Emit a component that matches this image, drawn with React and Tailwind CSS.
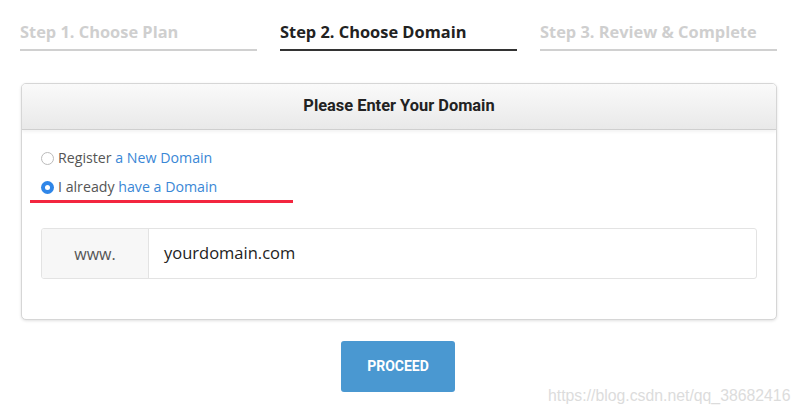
export default function App() {
  const steps = [
    { label: "Step 1. Choose Plan", active: false },
    { label: "Step 2. Choose Domain", active: true },
    { label: "Step 3. Review & Complete", active: false },
  ];
  return (
    <div className="relative w-[800px] h-[414px] bg-white overflow-hidden">
      <div className="flex gap-[23px] pl-[20px]">
        {steps.map((s) => (
          <div
            key={s.label}
            className={`w-[237px] pt-[20px] pb-[5px] border-b-2 ${s.active ? "border-[#333]" : "border-[#d0d0d0]"}`}
          >
            <div
              className={`text-[16.4px] leading-[24px] font-bold ${s.active ? "text-[#222]" : "text-[#cfcfcf]"}`}
              style={{ fontFamily: '"Open Sans", sans-serif' }}
            >
              {s.label}
            </div>
          </div>
        ))}
      </div>

      <div className="ml-[21px] mt-[32px] w-[756px] rounded-[5px] border border-[#d6d6d6] shadow-[0_1px_3px_rgba(0,0,0,0.12)] bg-white overflow-hidden">
        <div
          className="h-[46px] flex items-center justify-center border-b border-[#cfcfcf] bg-gradient-to-b from-[#fafafa] to-[#e9e9e9] shadow-[0_2px_3px_rgba(0,0,0,0.05)]"
        >
          <span
            className="text-[16.4px] font-bold text-[#222]"
            style={{ fontFamily: "Roboto, sans-serif" }}
          >
            Please Enter Your Domain
          </span>
        </div>
        <div className="pt-[16px] pb-[40px] px-[19px]" style={{ fontFamily: '"Open Sans", sans-serif' }}>
          <div className="flex items-center h-[24px] text-[14.2px] text-[#555]">
            <span className="w-[13px] h-[13px] rounded-full border border-[#bbb] bg-white mr-[4px]" />
            <span>Register&nbsp;</span>
            <span className="text-[#3a87d6]">a New Domain</span>
          </div>
          <div className="flex items-center h-[24px] mt-[5px] text-[14.2px] text-[#555]">
            <span className="w-[13px] h-[13px] rounded-full bg-[#2f86e8] mr-[4px] flex items-center justify-center">
              <span className="w-[5px] h-[5px] rounded-full bg-white" />
            </span>
            <span>I already&nbsp;</span>
            <span className="text-[#3a87d6]">have a Domain</span>
          </div>
          <div className="ml-[-11px] mt-[1px] w-[263px] h-[3px] bg-[#f3263f]" />
          <div className="mt-[25px] flex h-[51px] border border-[#e3e3e3] rounded-[3px] overflow-hidden">
            <div className="w-[107px] bg-[#f7f7f7] border-r border-[#e3e3e3] flex items-center justify-center text-[16px] text-[#555]">
              www.
            </div>
            <div className="flex-1 flex items-center pl-[15px] text-[16.5px] text-[#222]">
              yourdomain.com
            </div>
          </div>
        </div>
      </div>

      <div className="flex justify-center mt-[21px] ml-[-4px]">
        <button
          className="w-[114px] h-[51px] rounded-[3px] bg-[#4a98d1] text-white text-[14px] font-bold"
          style={{ fontFamily: "Roboto, sans-serif" }}
        >
          PROCEED
        </button>
      </div>

      <div
        className="absolute left-[548px] top-[386px] text-[15.8px] leading-[20px] text-[#dcdcdc]"
        style={{ fontFamily: '"Liberation Sans", Arial, sans-serif' }}
      >
        https://blog.csdn.net/qq_38682416
      </div>
    </div>
  );
}
